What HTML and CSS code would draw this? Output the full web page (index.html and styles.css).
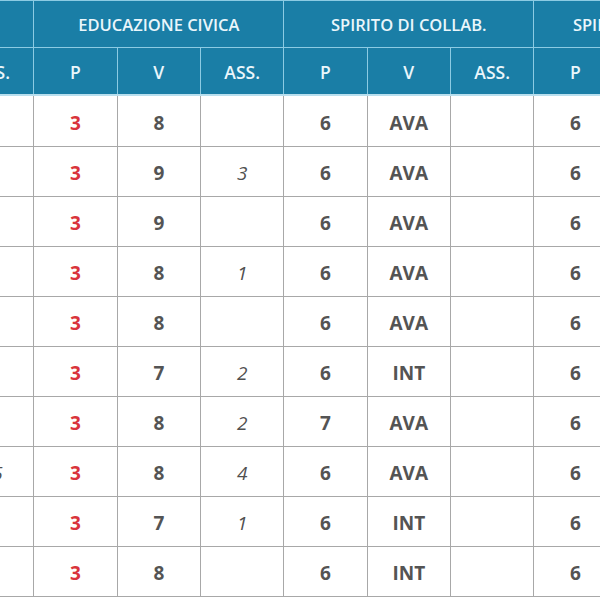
FILE: index.html
```html
<!DOCTYPE html>
<html lang="it">
<head>
<meta charset="utf-8">
<title>Voti</title>
<link rel="stylesheet" href="styles.css">
</head>
<body>
<div class="viewport">
<table class="grid">
  <colgroup>
    <col><col><col><col><col><col><col><col><col><col>
  </colgroup>
  <thead>
    <tr class="groups">
      <th></th>
      <th colspan="3">EDUCAZIONE CIVICA</th>
      <th colspan="3">SPIRITO DI COLLAB.</th>
      <th colspan="3">SPIRITO DI INIZIATIVA</th>
    </tr>
    <tr class="subs">
      <th>ASS.</th>
      <th>P</th><th>V</th><th>ASS.</th>
      <th>P</th><th>V</th><th>ASS.</th>
      <th>P</th><th>V</th><th>ASS.</th>
    </tr>
  </thead>
  <tbody>
    <tr class="first"><td class="a"></td><td class="p">3</td><td>8</td><td class="a"></td><td>6</td><td>AVA</td><td class="a"></td><td>6</td><td>AVA</td><td class="a"></td></tr>
    <tr><td class="a"></td><td class="p">3</td><td>9</td><td class="a">3</td><td>6</td><td>AVA</td><td class="a"></td><td>6</td><td>AVA</td><td class="a"></td></tr>
    <tr><td class="a"></td><td class="p">3</td><td>9</td><td class="a"></td><td>6</td><td>AVA</td><td class="a"></td><td>6</td><td>AVA</td><td class="a"></td></tr>
    <tr><td class="a"></td><td class="p">3</td><td>8</td><td class="a">1</td><td>6</td><td>AVA</td><td class="a"></td><td>6</td><td>AVA</td><td class="a"></td></tr>
    <tr><td class="a"></td><td class="p">3</td><td>8</td><td class="a"></td><td>6</td><td>AVA</td><td class="a"></td><td>6</td><td>AVA</td><td class="a"></td></tr>
    <tr><td class="a"></td><td class="p">3</td><td>7</td><td class="a">2</td><td>6</td><td>INT</td><td class="a"></td><td>6</td><td>INT</td><td class="a"></td></tr>
    <tr><td class="a"></td><td class="p">3</td><td>8</td><td class="a">2</td><td>7</td><td>AVA</td><td class="a"></td><td>6</td><td>AVA</td><td class="a"></td></tr>
    <tr><td class="a">15</td><td class="p">3</td><td>8</td><td class="a">4</td><td>6</td><td>AVA</td><td class="a"></td><td>6</td><td>AVA</td><td class="a"></td></tr>
    <tr><td class="a"></td><td class="p">3</td><td>7</td><td class="a">1</td><td>6</td><td>INT</td><td class="a"></td><td>6</td><td>INT</td><td class="a"></td></tr>
    <tr><td class="a"></td><td class="p">3</td><td>8</td><td class="a"></td><td>6</td><td>INT</td><td class="a"></td><td>6</td><td>INT</td><td class="a"></td></tr>
  </tbody>
</table>
</div>
</body>
</html>
```

FILE: styles.css
```css
html, body {
  margin: 0;
  padding: 0;
  background: #ffffff;
}

.viewport {
  width: 600px;
  height: 600px;
  overflow: hidden;
}

.grid {
  margin-left: -50px;
  width: 833.3px;
  table-layout: fixed;
  border-collapse: collapse;
  font-family: "Open Sans", "Liberation Sans", sans-serif;
}

.grid col {
  width: 83.33px;
}

.grid th {
  background: #1a7ea6;
  color: #eaf6fb;
  font-weight: 600;
  text-align: center;
  white-space: nowrap;
  padding: 0;
  border-left: 1px solid #8ccbe3;
  border-right: 1px solid #8ccbe3;
}

.groups th {
  height: 46px;
  font-size: 16.5px;
  border-top: 1px solid #8ccbe3;
  border-bottom: 1px solid #8ccbe3;
}

.subs th {
  height: 45px;
  font-size: 17.5px;
  padding-top: 1px;
  border-bottom: 2px solid #b9dfee;
}

.grid td {
  height: 46px;
  padding: 3px 0 0;
  text-align: center;
  white-space: nowrap;
  font-size: 19px;
  font-weight: 700;
  color: #545454;
  border: 1px solid #a8a8a8;
}

.grid tr.first td {
  height: 47px;
}

.grid td.p {
  color: #d9343c;
}

.grid td.a {
  font-weight: 400;
  font-style: italic;
  color: #505050;
}
```
